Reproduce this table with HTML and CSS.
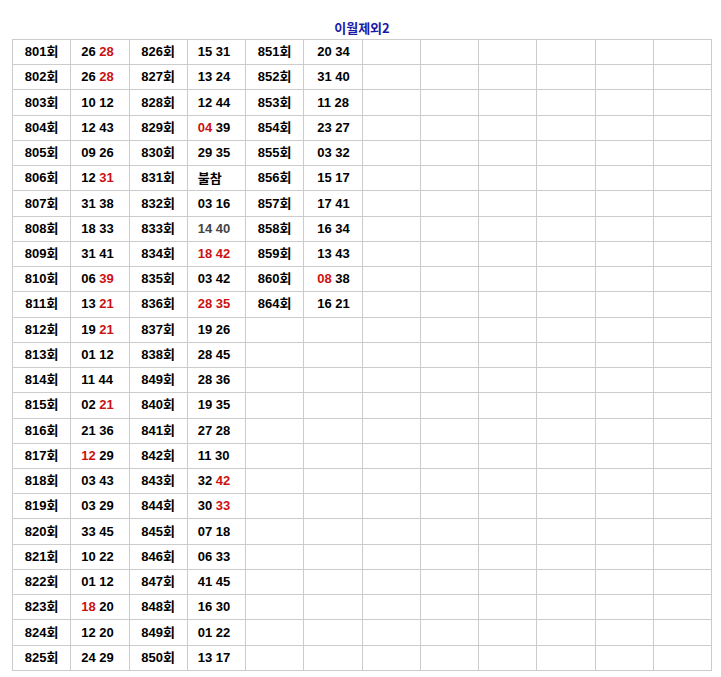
FILE: index.html
```html
<!DOCTYPE html>
<html lang="ko">
<head>
<meta charset="utf-8">
<title>이월제외2</title>
<link rel="stylesheet" href="styles.css">
</head>
<body>
<div class="page">
  <h1 class="title">이월제외2</h1>
  <table class="grid">
    <tbody>
      <tr><td class="lb">801회</td><td class="n a">26 <b class="r">28</b></td><td class="lb">826회</td><td class="n a">15 31</td><td class="lb">851회</td><td class="n c">20 34</td><td></td><td></td><td></td><td></td><td></td><td></td></tr>
      <tr><td class="lb">802회</td><td class="n a">26 <b class="r">28</b></td><td class="lb">827회</td><td class="n a">13 24</td><td class="lb">852회</td><td class="n c">31 40</td><td></td><td></td><td></td><td></td><td></td><td></td></tr>
      <tr><td class="lb">803회</td><td class="n a">10 12</td><td class="lb">828회</td><td class="n a">12 44</td><td class="lb">853회</td><td class="n c">11 28</td><td></td><td></td><td></td><td></td><td></td><td></td></tr>
      <tr><td class="lb">804회</td><td class="n a">12 43</td><td class="lb">829회</td><td class="n a"><b class="r">04</b> 39</td><td class="lb">854회</td><td class="n c">23 27</td><td></td><td></td><td></td><td></td><td></td><td></td></tr>
      <tr><td class="lb">805회</td><td class="n a">09 26</td><td class="lb">830회</td><td class="n a">29 35</td><td class="lb">855회</td><td class="n c">03 32</td><td></td><td></td><td></td><td></td><td></td><td></td></tr>
      <tr><td class="lb">806회</td><td class="n a">12 <b class="r">31</b></td><td class="lb">831회</td><td class="n a kr">불참</td><td class="lb">856회</td><td class="n c">15 17</td><td></td><td></td><td></td><td></td><td></td><td></td></tr>
      <tr><td class="lb">807회</td><td class="n a">31 38</td><td class="lb">832회</td><td class="n a">03 16</td><td class="lb">857회</td><td class="n c">17 41</td><td></td><td></td><td></td><td></td><td></td><td></td></tr>
      <tr><td class="lb">808회</td><td class="n a">18 33</td><td class="lb">833회</td><td class="n a g">14 40</td><td class="lb">858회</td><td class="n c">16 34</td><td></td><td></td><td></td><td></td><td></td><td></td></tr>
      <tr><td class="lb">809회</td><td class="n a">31 41</td><td class="lb">834회</td><td class="n a"><b class="r">18 42</b></td><td class="lb">859회</td><td class="n c">13 43</td><td></td><td></td><td></td><td></td><td></td><td></td></tr>
      <tr><td class="lb">810회</td><td class="n a">06 <b class="r">39</b></td><td class="lb">835회</td><td class="n a">03 42</td><td class="lb">860회</td><td class="n c"><b class="r">08</b> 38</td><td></td><td></td><td></td><td></td><td></td><td></td></tr>
      <tr><td class="lb">811회</td><td class="n a">13 <b class="r">21</b></td><td class="lb">836회</td><td class="n a"><b class="r">28 35</b></td><td class="lb">864회</td><td class="n c">16 21</td><td></td><td></td><td></td><td></td><td></td><td></td></tr>
      <tr><td class="lb">812회</td><td class="n a">19 <b class="r">21</b></td><td class="lb">837회</td><td class="n a">19 26</td><td></td><td></td><td></td><td></td><td></td><td></td><td></td><td></td></tr>
      <tr><td class="lb">813회</td><td class="n a">01 12</td><td class="lb">838회</td><td class="n a">28 45</td><td></td><td></td><td></td><td></td><td></td><td></td><td></td><td></td></tr>
      <tr><td class="lb">814회</td><td class="n a">11 44</td><td class="lb">849회</td><td class="n a">28 36</td><td></td><td></td><td></td><td></td><td></td><td></td><td></td><td></td></tr>
      <tr><td class="lb">815회</td><td class="n a">02 <b class="r">21</b></td><td class="lb">840회</td><td class="n a">19 35</td><td></td><td></td><td></td><td></td><td></td><td></td><td></td><td></td></tr>
      <tr><td class="lb">816회</td><td class="n a">21 36</td><td class="lb">841회</td><td class="n a">27 28</td><td></td><td></td><td></td><td></td><td></td><td></td><td></td><td></td></tr>
      <tr><td class="lb">817회</td><td class="n a"><b class="r">12</b> 29</td><td class="lb">842회</td><td class="n a">11 30</td><td></td><td></td><td></td><td></td><td></td><td></td><td></td><td></td></tr>
      <tr><td class="lb">818회</td><td class="n a">03 43</td><td class="lb">843회</td><td class="n a">32 <b class="r">42</b></td><td></td><td></td><td></td><td></td><td></td><td></td><td></td><td></td></tr>
      <tr><td class="lb">819회</td><td class="n a">03 29</td><td class="lb">844회</td><td class="n a">30 <b class="r">33</b></td><td></td><td></td><td></td><td></td><td></td><td></td><td></td><td></td></tr>
      <tr><td class="lb">820회</td><td class="n a">33 45</td><td class="lb">845회</td><td class="n a">07 18</td><td></td><td></td><td></td><td></td><td></td><td></td><td></td><td></td></tr>
      <tr><td class="lb">821회</td><td class="n a">10 22</td><td class="lb">846회</td><td class="n a">06 33</td><td></td><td></td><td></td><td></td><td></td><td></td><td></td><td></td></tr>
      <tr><td class="lb">822회</td><td class="n a">01 12</td><td class="lb">847회</td><td class="n a">41 45</td><td></td><td></td><td></td><td></td><td></td><td></td><td></td><td></td></tr>
      <tr><td class="lb">823회</td><td class="n a"><b class="r">18</b> 20</td><td class="lb">848회</td><td class="n a">16 30</td><td></td><td></td><td></td><td></td><td></td><td></td><td></td><td></td></tr>
      <tr><td class="lb">824회</td><td class="n a">12 20</td><td class="lb">849회</td><td class="n a">01 22</td><td></td><td></td><td></td><td></td><td></td><td></td><td></td><td></td></tr>
      <tr><td class="lb">825회</td><td class="n a">24 29</td><td class="lb">850회</td><td class="n a">13 17</td><td></td><td></td><td></td><td></td><td></td><td></td><td></td><td></td></tr>
    </tbody>
  </table>
</div>
</body>
</html>
```

FILE: styles.css
```css
html, body {
  margin: 0;
  padding: 0;
  background: #ffffff;
}

.page {
  width: 700px;
  padding: 19px 0 0 12px;
}

.title {
  margin: 0;
  height: 20px;
  font-family: "Noto Sans CJK KR", "Liberation Sans", sans-serif;
  font-size: 13px;
  font-weight: bold;
  line-height: 18px;
  color: #1a1aa8;
  text-align: center;
}

.grid {
  width: 700px;
  table-layout: fixed;
  border-collapse: collapse;
  font-family: "Liberation Sans", "Noto Sans CJK KR", sans-serif;
  font-size: 13px;
  font-weight: bold;
  color: #000000;
}

.grid td {
  border: 1px solid #cccccc;
  height: 24.24px;
  padding: 0;
  line-height: 16px;
  white-space: nowrap;
  overflow: hidden;
}

.grid .lb {
  text-align: center;
}

.grid .n {
  text-align: left;
}

.grid .a {
  padding-left: 10px;
}

.grid .c {
  padding-left: 13px;
}

.grid .kr {
  font-family: "Noto Sans CJK KR", sans-serif;
}

.grid .g {
  color: #444444;
}

.grid .r {
  color: #cc1111;
  font-weight: bold;
}
```
